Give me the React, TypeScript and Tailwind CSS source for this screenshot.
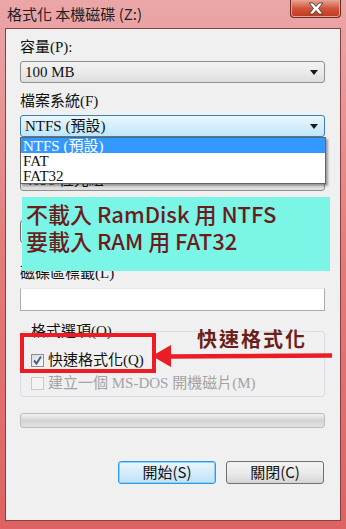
import React from 'react'

const ui = "font-['Liberation_Serif','Noto_Sans_CJK_TC',serif]"
const cjk = "font-['Noto_Sans_CJK_TC','Noto_Sans',sans-serif]"

function Arrow() {
  return (
    <svg width="8" height="5" viewBox="0 0 8 5" className="shrink-0">
      <path d="M0 0 H8 L4 5 Z" fill="#1a1a1a" />
    </svg>
  )
}

function Combo({ value, focused }: { value: string; focused?: boolean }) {
  return (
    <div
      className={`mt-[4px] h-[22px] rounded-[3px] border flex items-center pl-[4px] pr-[6px] ${
        focused
          ? 'border-[#3c7fb1] bg-linear-to-b from-[#eaf6fd] to-[#bee6fd]'
          : 'border-[#8e8f8f] bg-linear-to-b from-[#f2f2f2] via-[#ebebeb] to-[#dddddd]'
      }`}
    >
      <span className={`flex-1 text-[15px] leading-[20px] text-[#111] ${ui}`}>{value}</span>
      <Arrow />
    </div>
  )
}

function Label({ children, className = '' }: { children: React.ReactNode; className?: string }) {
  return <div className={`h-[20px] text-[15px] leading-[20px] text-[#111] ${ui} ${className}`}>{children}</div>
}

function Checkbox({ checked, disabled }: { checked?: boolean; disabled?: boolean }) {
  return (
    <div
      className={`w-[13px] h-[13px] border shrink-0 flex items-center justify-center ${
        disabled ? 'border-[#c9c9c9] bg-[#f4f4f4]' : 'border-[#8e8f8f] bg-linear-to-br from-[#dcdcdc] to-[#fbfbfb]'
      }`}
    >
      {checked && (
        <svg width="11" height="11" viewBox="0 0 11 11">
          <path d="M2 5.5 L4.5 8.5 L9 1.5" fill="none" stroke="#4a5f97" strokeWidth="2" />
        </svg>
      )}
    </div>
  )
}

function Button({ children, focused }: { children: React.ReactNode; focused?: boolean }) {
  return (
    <div
      className={`w-[98px] h-[23px] rounded-[3px] border flex items-center justify-center text-[15px] text-[#111] ${cjk} ${
        focused
          ? 'border-[#3399dd] bg-linear-to-b from-[#eaf6fd] to-[#bfe2f6] shadow-[inset_0_0_0_1px_#8ad0f7]'
          : 'border-[#707070] bg-linear-to-b from-[#f2f2f2] via-[#ebebeb] to-[#d5d5d5]'
      }`}
    >
      {children}
    </div>
  )
}

export default function App() {
  return (
    <div className="relative w-[346px] h-[529px] overflow-hidden flex flex-col bg-linear-to-b from-[#eba6a8] via-[#e37a7a] to-[#de6262]">
      {/* Title bar */}
      <div className="h-[28px] flex items-start shrink-0">
        <div className={`pl-[7px] pt-[4px] text-[15px] leading-[20px] text-[#1e1e1e] ${cjk}`}>格式化 本機磁碟 (Z:)</div>
        <div className="ml-auto mr-[5px] w-[51px] h-[18px] rounded-b-[4px] border border-t-0 border-[#6e2a24] bg-linear-to-b from-[#e6a394] via-[#d0533a] to-[#c0381e] flex items-center justify-center shadow-[inset_0_0_0_1px_#eaa090]">
          <svg width="18" height="13" viewBox="0 0 18 13">
            <path
              d="M2 1 H6 L9 4.5 L12 1 H16 L11.5 6.5 L16 12 H12 L9 8.5 L6 12 H2 L6.5 6.5 Z"
              fill="#ffffff"
              stroke="#4a3a3a"
              strokeWidth="0.9"
            />
          </svg>
        </div>
      </div>

      {/* Client area */}
      <div className="flex-1 px-[5px] pb-[8px]">
        <div className="h-full border border-[#8a4040] bg-[#f0f0f0] pl-[14px] pr-[15px] pt-[8px] flex flex-col">
          <Label>容量(P):</Label>
          <Combo value="100 MB" />

          <Label className="mt-[8px]">檔案系統(F)</Label>
          <Combo value="NTFS (預設)" focused />

          <Label className="mt-[8px]">配置單位大小(A)</Label>
          <Combo value="4096 位元組" />

          <div className={`mt-[29px] w-[130px] h-[23px] rounded-[3px] border border-[#707070] bg-[#e8e8e8] flex items-center justify-center text-[15px] ${cjk}`}>
            還原裝置預設值(D)
          </div>

          <Label className="mt-[20px]">磁碟區標籤(L)</Label>
          <div className="mt-[5px] h-[23px] border border-[#abadb3] border-t-[#e3e9ef] bg-white" />

          {/* Format options group */}
          <div className="relative mt-[20px] h-[66px] rounded-[3px] border border-[#d5dfe5] pl-[10px] pt-[18px]">
            <div className={`absolute -top-[11px] left-[8px] px-[2px] bg-[#f0f0f0] text-[15px] leading-[20px] text-[#111] ${ui}`}>
              格式選項(O)
            </div>
            <div className="flex items-center gap-[4px] h-[20px]">
              <Checkbox checked />
              <span className={`text-[15px] leading-[20px] text-[#111] ${ui}`}>快速格式化(Q)</span>
            </div>
            <div className="flex items-center gap-[4px] h-[20px] mt-[3px]">
              <Checkbox disabled />
              <span className={`text-[15px] leading-[20px] text-[#a3a3a3] ${ui}`}>建立一個 MS-DOS 開機磁片(M)</span>
            </div>
          </div>

          {/* Progress bar */}
          <div className="mt-[16px] h-[15px] rounded-[3px] border border-[#bcbcbc] bg-linear-to-b from-[#f3f3f3] via-[#d3d3d3] to-[#e2e2e2]" />

          <div className="mt-[33px] flex justify-end gap-[10px] pr-[1px]">
            <Button focused>開始(S)</Button>
            <Button>關閉(C)</Button>
          </div>
        </div>
      </div>

      {/* Open file-system dropdown */}
      <div className={`absolute left-[20px] top-[137px] w-[306px] h-[47px] border border-[#646464] bg-white shadow-[2px_2px_2px_rgba(0,0,0,0.35)] text-[15px] leading-[15px] text-[#111] ${ui}`}>
        <div className="h-[15px] bg-[#3399ff] text-white pl-[2px] leading-[16px]">NTFS (預設)</div>
        <div className="h-[15px] pl-[2px] leading-[16px]">FAT</div>
        <div className="h-[15px] pl-[2px] leading-[16px]">FAT32</div>
      </div>

      {/* Annotation box */}
      <div className={`absolute left-[22px] top-[197px] w-[308px] h-[74px] bg-[#7af5e6] pl-[4px] pt-[3px] text-[22px] leading-[27px] font-medium text-[#6b1c1c] ${cjk}`}>
        <div>不載入 RamDisk 用 NTFS</div>
        <div>要載入 RAM 用 FAT32</div>
      </div>

      {/* Red highlight + arrow */}
      <div className="absolute left-[20px] top-[333px] w-[136px] h-[40px] border-[4px] border-[#ec1c24]" />
      <svg className="absolute left-[150px] top-[341px]" width="185" height="30" viewBox="0 0 185 30">
        <polygon points="2,15 21,4 21,26" fill="#ec1c24" />
        <line x1="18" y1="15.5" x2="182" y2="14.5" stroke="#ec1c24" strokeWidth="4.5" />
      </svg>
      <div className={`absolute left-[197px] top-[327px] text-[20px] leading-[24px] font-bold tracking-[2px] text-[#6a2018] ${cjk}`}>
        快速格式化
      </div>
    </div>
  )
}
